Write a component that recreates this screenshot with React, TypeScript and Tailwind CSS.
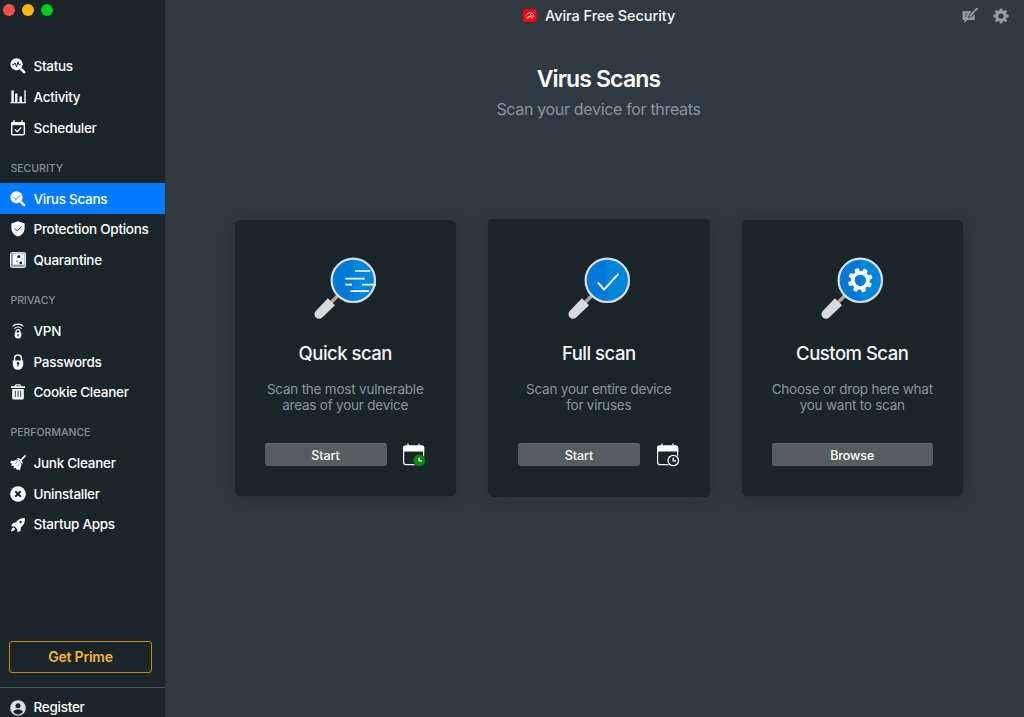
import type { ReactNode } from "react";
import clsx from "clsx";

const Svg = ({ children, className = "size-4" }: { children: ReactNode; className?: string }) => (
  <svg viewBox="0 0 16 16" className={clsx("shrink-0 overflow-visible", className)} fill="none">
    {children}
  </svg>
);

/* sidebar icons */
const StatusIcon = () => (
  <Svg>
    <circle cx="6.5" cy="6.3" r="6.1" fill="#fff" />
    <path d="M2.3 6.8h1.5l1.2-2 1.6 4 1.4-5 1 3h1.7" stroke="#1a2529" strokeWidth="1" />
    <path d="M11.3 11.3l2.9 2.9" stroke="#fff" strokeWidth="2.6" strokeLinecap="round" />
  </Svg>
);

const ActivityIcon = () => (
  <Svg>
    <path d="M0.3 13.7h15.4" stroke="#fff" strokeWidth="1.2" />
    <path d="M2.6 1.5v12M6.3 4.5v9M10.7 7.5v6" stroke="#fff" strokeWidth="2.4" />
    <path d="M15 1.3V14" stroke="#fff" strokeWidth="1.3" />
  </Svg>
);

const SchedulerIcon = () => (
  <Svg>
    <rect x="1.7" y="2.6" width="12.6" height="12.2" rx="1" stroke="#fff" strokeWidth="1.4" />
    <path d="M1.5 2.2h13v3h-13z" fill="#fff" />
    <path d="M4 .2v3M12 .2v3" stroke="#fff" strokeWidth="1.5" />
    <path d="M5 9.5l2.2 2.2 4-4.3" stroke="#fff" strokeWidth="1.3" />
  </Svg>
);

const VirusIcon = () => (
  <Svg>
    <circle cx="6.5" cy="6.3" r="6.1" fill="#fff" />
    <path d="M3.8 6.3L6 8.5l4-4" stroke="#087cf5" strokeWidth="1" />
    <path d="M11.3 11.3l2.9 2.9" stroke="#fff" strokeWidth="2.6" strokeLinecap="round" />
  </Svg>
);

const ShieldIcon = () => (
  <Svg>
    <path d="M8 .2l6.6 2.3v4.7c0 3.8-2.8 7-6.6 8.4C4.2 14.2 1.4 11 1.4 7.2V2.5z" fill="#fff" />
    <path d="M4.8 7.5L7.2 9.9l4.3-4.2" stroke="#1a2529" strokeWidth="1" />
  </Svg>
);

const QuarantineIcon = () => (
  <Svg>
    <rect x=".6" y=".7" width="14.8" height="14.6" rx=".8" fill="#8f979b" stroke="#fff" strokeWidth="1" />
    <rect x="2.9" y="1.8" width="11.4" height="10.8" fill="#fff" />
    <circle cx="8.8" cy="4.5" r="1.5" fill="#1a2529" />
    <circle cx="10.8" cy="10.9" r="1.4" fill="#1a2529" />
    <path d="M6.2 8.6h1.3v1.3H6.2zM11.5 6.5h1v1h-1z" fill="#59636a" />
  </Svg>
);

const VpnIcon = () => (
  <Svg>
    <path d="M2.6 3.4a7.5 7.5 0 0 1 10.8 0M4.4 5.6a5 5 0 0 1 7.2 0" stroke="#fff" strokeWidth="1.1" />
    <path d="M6 10V8.6a2 2 0 0 1 4 0V10" stroke="#fff" strokeWidth="1.1" />
    <path d="M4.7 9.5h6.6v2.7a3.3 3.3 0 0 1-6.6 0z" fill="#fff" />
    <path d="M8 11v2.3" stroke="#1a2529" strokeWidth="1.3" />
  </Svg>
);

const LockIcon = () => (
  <Svg>
    <path d="M4.6 8V4.3a3.4 3.4 0 0 1 6.8 0V8" stroke="#fff" strokeWidth="1.5" />
    <path d="M2.8 6.6h10.4v4a5.2 5.2 0 0 1-10.4 0z" fill="#fff" />
    <circle cx="8" cy="9.3" r="1.2" fill="#1a2529" />
    <path d="M8 9.5v3" stroke="#1a2529" strokeWidth="1.1" />
  </Svg>
);

const TrashIcon = () => (
  <Svg>
    <path d="M5.3 2.5V1.8q0-1 1-1h3.4q1 0 1 1v.7" stroke="#fff" strokeWidth="1.2" />
    <path d="M1 2.3h14v1.8H1zM2.2 4.9h11.6v9.2q0 1.5-1.5 1.5H3.7q-1.5 0-1.5-1.5z" fill="#fff" />
    <path d="M5.3 6.5v6.5M8 6.5v6.5M10.7 6.5v6.5" stroke="#1a2529" strokeWidth=".9" />
  </Svg>
);

const BroomIcon = () => (
  <Svg>
    <path d="M15 1L10.7 5.5" stroke="#fff" strokeWidth="1.8" strokeLinecap="round" />
    <path d="M7.3 3.5q3.5.3 5 5" stroke="#fff" strokeWidth="1.3" />
    <path d="M6.8 4.5q3.7.7 4.7 5l-1.6 6-2-1.2-.8 1-1.5-2.5-2 .8.3-2.5L1 10.500l1.2-1.700L.2 7.700 1 5.500l2 .5z" fill="#fff" />
    <path d="M7.5 6.2l-2 2.3M9.7 8.7l-1.7 2" stroke="#1a2529" strokeWidth=".6" />
  </Svg>
);

const UninstallIcon = () => (
  <Svg>
    <circle cx="8" cy="8" r="7.8" fill="#fff" />
    <path d="M5.2 5.2l5.600 5.600M10.800 5.200l-5.600 5.600" stroke="#1a2529" strokeWidth="2" />
  </Svg>
);

const RocketIcon = () => (
  <Svg>
    <path d="M14.8 1c.3 4.3-.9 7-3.8 9.3l-.6 3.6-2.8 1.3-.5-3L4.7 9.5 1 9.300l1.800-3L6 5.300C8.300 2.300 11 1 14.800 1z" fill="#fff" />
    <circle cx="10.6" cy="5.1" r="1.2" fill="#1a2529" />
    <path d="M3.4 10.3q-2 1-2.400 4.200 3-.2 4.300-2.300z" fill="#fff" />
  </Svg>
);

const UserIcon = () => (
  <Svg>
    <circle cx="8" cy="8" r="7.8" fill="#dcdfe0" />
    <circle cx="8" cy="5.7" r="2.5" fill="#1a2529" />
    <path d="M3 11.8q1.5-2.6 5-2.6t5 2.600Q11 14.500 8 14.500T3 11.800z" fill="#1a2529" />
  </Svg>
);

type Group = { title: string; items: { label: string; icon: ReactNode; active?: boolean }[] };

const groups: Group[] = [
  {
    title: "",
    items: [
      { label: "Status", icon: <StatusIcon /> },
      { label: "Activity", icon: <ActivityIcon /> },
      { label: "Scheduler", icon: <SchedulerIcon /> },
    ],
  },
  {
    title: "SECURITY",
    items: [
      { label: "Virus Scans", icon: <VirusIcon />, active: true },
      { label: "Protection Options", icon: <ShieldIcon /> },
      { label: "Quarantine", icon: <QuarantineIcon /> },
    ],
  },
  {
    title: "PRIVACY",
    items: [
      { label: "VPN", icon: <VpnIcon /> },
      { label: "Passwords", icon: <LockIcon /> },
      { label: "Cookie Cleaner", icon: <TrashIcon /> },
    ],
  },
  {
    title: "PERFORMANCE",
    items: [
      { label: "Junk Cleaner", icon: <BroomIcon /> },
      { label: "Uninstaller", icon: <UninstallIcon /> },
      { label: "Startup Apps", icon: <RocketIcon /> },
    ],
  },
];

const gearPath = (teeth: number, outer: number, inner: number, turn: number) => {
  const step = (Math.PI * 2) / teeth;
  const points: string[] = [];
  for (let i = 0; i < teeth; i++) {
    const a = i * step + turn;
    [
      [-0.3, inner],
      [-0.19, outer],
      [0.19, outer],
      [0.3, inner],
    ].forEach(([k, r]) => {
      points.push(`${(Math.cos(a + k * step) * r).toFixed(2)} ${(Math.sin(a + k * step) * r).toFixed(2)}`);
    });
  }
  return `M${points.join("L")}Z`;
};

const Magnifier = ({ children }: { children: ReactNode }) => (
  <svg viewBox="0 0 64 64" className="ml-[2px] size-16 shrink-0" fill="none">
    <path d="M25.5 37L17.5 45" stroke="#a6a9ab" strokeWidth="3.6" />
    <path d="M13.9 41.2L21 48.3 8.2 60.5A4.5 4.5 0 0 1 1.8 54.1z" fill="#d8dadb" />
    <circle cx="39.3" cy="23.3" r="21.7" fill="#0078d7" />
    <path d="M39.3 1.6a21.7 21.7 0 0 1 0 43.4z" fill="#0086d9" />
    <circle cx="39.3" cy="23.3" r="21.7" stroke="#dadcdd" strokeWidth="2.2" />
    {children}
  </svg>
);

const CalendarIcon = ({ done }: { done?: boolean }) => (
  <svg viewBox="0 0 24 24" className="mt-px size-6 shrink-0" fill="none">
    <rect x="1.6" y="3.1" width="20" height="18.5" rx="2" stroke="#fff" strokeWidth="1.2" />
    <path d="M1 8.6V4.5q0-2 2-2h17.2q2 0 2 2v4.1z" fill="#fff" />
    <path d="M6 .5v3M17 .5v3" stroke="#fff" strokeWidth="1.2" />
    <circle cx="17.3" cy="17.5" r="6.5" fill="#1a2529" />
    <circle
      cx="17.3"
      cy="17.5"
      r="5.2"
      fill={done ? "#078a0b" : "#1a2529"}
      stroke={done ? "#078a0b" : "#fff"}
      strokeWidth="1.3"
    />
    <path d="M17.2 14.7v3.2h2.8" stroke="#fff" strokeWidth="1.4" />
  </svg>
);

type CardProps = {
  title: string;
  lines: string[];
  button: string;
  drawing: ReactNode;
  calendar?: ReactNode;
  className?: string;
};

const ScanCard = ({ title, lines, button, drawing, calendar, className }: CardProps) => (
  <div
    className={clsx(
      "flex w-[221.5px] flex-col items-center rounded-[5px] bg-[#1a2529] px-[30px] shadow-[0_2px_20px_rgba(0,0,0,0.18)]",
      className
    )}
  >
    <div className="flex w-full justify-center">
      <Magnifier>{drawing}</Magnifier>
    </div>
    <h2 className="mt-[18.5px] text-[18.5px] leading-7 font-[450] tracking-[-0.5px] whitespace-nowrap text-[#f4f5f5]">
      {title}
    </h2>
    <div className="mt-[13.500px] text-center text-[13.5px] leading-[16.5px] tracking-[-0.22px] text-[#8c959d]">
      {lines.map((line) => (
        <p key={line} className="whitespace-nowrap">
          {line}
        </p>
      ))}
    </div>
    <div className="mt-[29px] flex h-6 w-full items-center gap-[15.5px]">
      <button className="h-[23px] flex-1 rounded-[3px] border-t border-[#687073] bg-[#555d60] pt-px text-[12.5px] leading-[22px] font-medium tracking-[-0.1px] text-white">
        {button}
      </button>
      {calendar}
    </div>
  </div>
);

const App = () => {
  return (
    <div className="flex h-[717px] w-[1024px] overflow-hidden bg-[#2f3941] font-['Inter','Liberation_Sans',sans-serif]">
      {/* sidebar */}
      <aside className="flex w-[165px] shrink-0 flex-col bg-[#1a2529]">
        <div className="flex h-[51.1px] gap-[7.2px] pt-[3.5px] pl-[2.5px]">
          <span className="size-[12px] rounded-full bg-[#ff4f4d]" />
          <span className="size-[12px] rounded-full bg-[#ffb900]" />
          <span className="size-[12px] rounded-full bg-[#00ca1c]" />
        </div>
        {groups.map((group) => (
          <nav key={group.title}>
            {group.title && (
              <h3 className="flex h-[40.200px] items-center pt-[10.5px] pl-[10.5px] text-[10.5px] font-medium text-[#87919a]">
                {group.title}
              </h3>
            )}
            {group.items.map((item) => (
              <a
                key={item.label}
                className={clsx(
                  "flex h-[30.7px] items-center gap-[7.5px] pl-[10px] text-[13.5px] font-medium tracking-[-0.28px] whitespace-nowrap text-white",
                  item.active && "bg-[#007aff]"
                )}
              >
                {item.icon}
                {item.label}
              </a>
            ))}
          </nav>
        ))}
        <div className="mt-auto">
          <button className="ml-[9px] block h-[32px] w-[143px] rounded-[3px] border border-[#c8871c] text-[14px] font-semibold tracking-[-0.2px] text-[#f9b233]">
            Get Prime
          </button>
          <div className="mt-[14.5px] flex h-[30px] items-center gap-[7.5px] border-t border-[#4a535a] pt-[10px] pl-[10px] text-[13.5px] font-medium tracking-[-0.26px] text-white">
            <UserIcon />
            Register
          </div>
        </div>
      </aside>

      {/* content */}
      <main className="flex flex-1 flex-col border-l border-[#28323a]">
        <header className="flex h-[31px] items-center pr-[15px]">
          <div className="ml-[357px] flex items-center gap-[8.5px]">
            <svg viewBox="0 0 14 14" className="size-[13.5px]" fill="none">
              <rect width="14" height="14" rx="2.5" fill="#f90006" />
              <path
                d="M3.2 6.8C4 4.7 6 3.8 8 4c2.3.2 3.3 1.6 3 3.7-1.2-.9-2.3-.8-3.3.1M8.600 4.200L6.100 8.800q-1.200 1.900-2.500.7.2-1.700 3.600-1.700M8 7.900q.2 2.300 2.600 1.600"
                stroke="#fff"
                strokeWidth=".8"
              />
            </svg>
            <span className="mt-px text-[14.5px] font-medium tracking-[-0.06px] whitespace-nowrap text-[#f4f5f5]">
              Avira Free Security
            </span>
          </div>
          <div className="ml-auto flex items-center gap-[15px]">
            <Svg>
              <path d="M.5 3.3h9L6.5 7.5l-.4 2.6 2.8-.5 3.8-3.2v5.500H5.500L2.500 15v-3.100h-2z" fill="#969b9f" />
              <path d="M2.8 6h3M2.8 8.3h2" stroke="#2f3941" strokeWidth=".7" />
              <path d="M7.7 8.5l5-5.7" stroke="#969b9f" strokeWidth="1.9" />
              <path d="M13.5 2L15 .8" stroke="#969b9f" strokeWidth="2.2" strokeLinecap="round" />
            </Svg>
            <Svg>
              <g transform="translate(8 8)">
                <path d={gearPath(8, 7.7, 5.9, 0)} fill="#969b9f" />
                <circle r="2.6" fill="#2f3941" />
              </g>
            </Svg>
          </div>
        </header>

        <div className="mt-[32px] pl-[7px] text-center">
          <h1 className="text-[23px] leading-8 font-semibold tracking-[-0.85px] text-white">Virus Scans</h1>
          <p className="mt-[2px] text-[16px] leading-6 tracking-[-0.33px] text-[#8c959d]">Scan your device for threats</p>
        </div>

        <div className="mt-[98px] flex items-start gap-[32px] pl-[68.5px]">
          <ScanCard
            className="mt-[0.5px] h-[276.5px] pt-[37px]"
            title="Quick scan"
            lines={["Scan the most vulnerable", "areas of your device"]}
            button="Start"
            calendar={<CalendarIcon done />}
            drawing={
              <path
                d="M41 14h15.3M31.3 21.7h19.4M31.3 27.7H38M48 27.7h14M36.3 34.2H55"
                stroke="#fff"
                strokeWidth="1.7"
              />
            }
          />
          <ScanCard
            className="h-[277.5px] pt-[37.5px]"
            title="Full scan"
            lines={["Scan your entire device", "for viruses"]}
            button="Start"
            calendar={<CalendarIcon />}
            drawing={<path d="M30 25.6l6 7L50.3 17" stroke="#fff" strokeWidth="1.9" />}
          />
          <ScanCard
            className="mt-[0.5px] h-[276.5px] pt-[37px]"
            title="Custom Scan"
            lines={["Choose or drop here what", "you want to scan"]}
            button="Browse"
            drawing={
              <g transform="translate(39.3 23.3)">
                <path d={gearPath(8, 12.1, 9.2, 0.47)} fill="#fff" stroke="#fff" strokeWidth=".5" strokeLinejoin="round" />
                <circle r="5.6" fill="#0078d7" />
                <path d="M0-5.6a5.6 5.6 0 0 1 0 11.2z" fill="#0086d9" />
              </g>
            }
          />
        </div>
      </main>
    </div>
  );
};

export default App;
